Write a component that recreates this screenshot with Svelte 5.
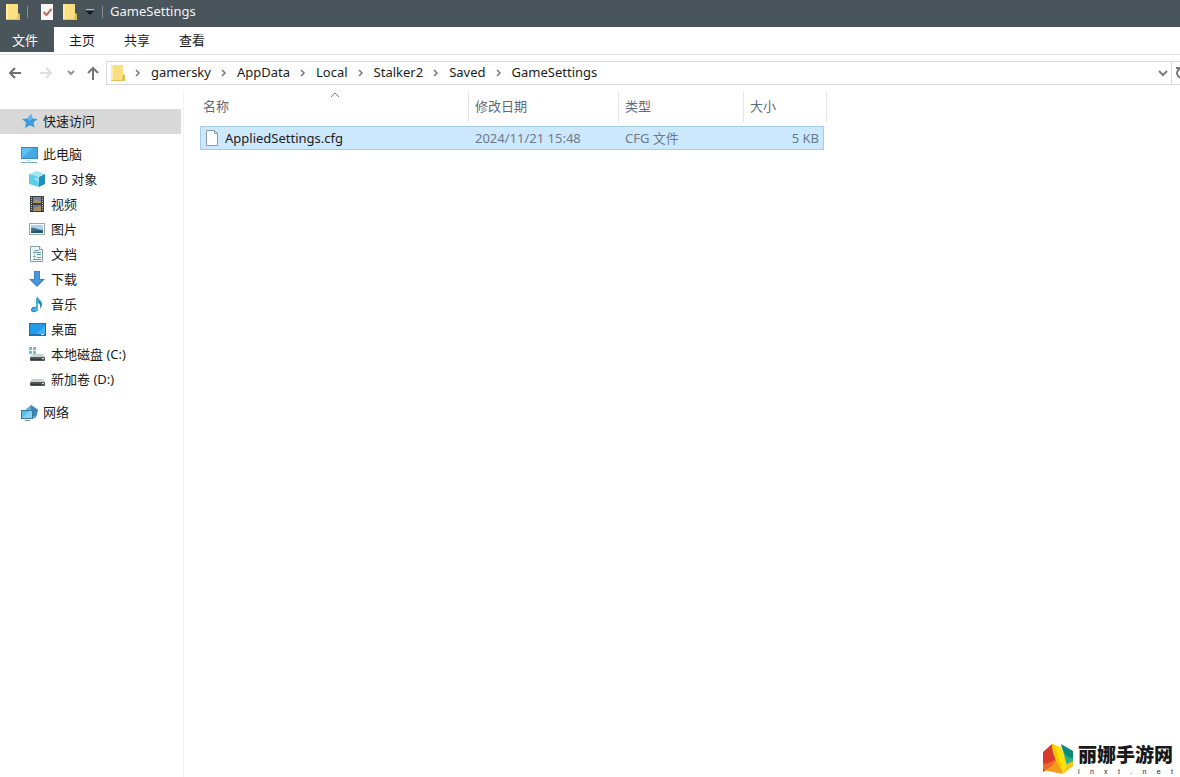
<script>
  const tabs = ['主页', '共享', '查看'];
  const crumbs = ['gamersky', 'AppData', 'Local', 'Stalker2', 'Saved', 'GameSettings'];

  const folders = [
    { icon: 'cube', label: '3D 对象' },
    { icon: 'video', label: '视频' },
    { icon: 'picture', label: '图片' },
    { icon: 'document', label: '文档' },
    { icon: 'download', label: '下载' },
    { icon: 'music', label: '音乐' },
    { icon: 'desktop', label: '桌面' },
    { icon: 'system', label: '本地磁盘 (C:)' },
    { icon: 'drive', label: '新加卷 (D:)' }
  ];

  const files = [
    { name: 'AppliedSettings.cfg', date: '2024/11/21 15:48', type: 'CFG 文件', size: '5 KB' }
  ];

  let selected = $state('AppliedSettings.cfg');
</script>

{#snippet folderIcon()}
  <svg width="14" height="18" viewBox="0 0 14 18" aria-hidden="true">
    <path d="M0 1h12v10l2 1v5H0z" fill="#fbe083" />
    <path d="M0 1h2v16H0z" fill="#fdeba6" />
    <path d="M12 10l2 1v6h-3z" fill="#e3bb55" />
    <path d="M0 16.500h14" stroke="#e6c35e" />
  </svg>
{/snippet}

{#snippet icon(kind)}
  <svg width="18" height="18" viewBox="0 0 18 18" aria-hidden="true">
    {#if kind === 'star'}
      <path d="M11 2l1.500 4.500 5 .5-4 3.500 1 5-4.500-2.300L5 16l1-5.500L2 7l5.500-.5z" fill="#3b9bdc" />
      <path d="M11 2l1.500 4.500-2.500 3-2.500-3z" fill="#62b8ec" />
    {:else if kind === 'pc'}
      <rect x="1" y="2" width="17" height="12" fill="#3a8cc0" />
      <rect x="2" y="3" width="15" height="10" fill="#5cc0f2" />
      <path d="M2 13L13 3h4v10z" fill="#43aae6" />
      <path d="M1 17.500h16" stroke="#77a9c6" />
      <path d="M7 15.500h4" stroke="#c3dce9" />
    {:else if kind === 'cube'}
      <path d="M1 4l8-3 8 3-7 3z" fill="#a5e5f3" />
      <path d="M1 4l10 3v10L1 14z" fill="#5bcde8" />
      <path d="M17 4l-6 3v10l6-3z" fill="#2390b8" />
      <path d="M5 8l6-1v6z" fill="#8ce0f2" />
    {:else if kind === 'video'}
      <rect x="2" y="1" width="14" height="16" fill="#3b4042" />
      <rect x="5" y="2" width="8" height="6" fill="#7188a3" />
      <path d="M5 8l3-4 5 3v1z" fill="#b39362" />
      <rect x="5" y="10" width="8" height="6" fill="#617c9c" />
      <path d="M5 15l3-3 5-1v5H5z" fill="#b18b5d" />
      <path d="M3.500 2v14M14.500 2v14" stroke="#c1c6c8" stroke-dasharray="1 1" />
    {:else if kind === 'picture'}
      <rect x="1.500" y="3.500" width="15" height="11" fill="#f6f9fa" stroke="#9ba8ad" />
      <rect x="3" y="5" width="12" height="8" fill="#a9d4ed" />
      <path d="M3 8c4-1 6 2 12 2v3H3z" fill="#46748b" />
      <path d="M3 12c4-2 8-2 12-1v2H3z" fill="#26566d" />
    {:else if kind === 'document'}
      <path d="M2.500 1.500h9l3 3v12h-12z" fill="#f1f8f7" stroke="#829c9f" />
      <path d="M11.500 1.500v3h3" fill="#fff" stroke="#829c9f" />
      <path d="M7 5.500h4M5 7.500h8M9 9.500h4M5 11.500h3M9 12.500h4M5 14.500h8" stroke="#659da5" />
      <path d="M6.500 5v9" stroke="#a0ced3" />
    {:else if kind === 'download'}
      <path d="M6 1h6v8h5l-8 8-8-8h5z" fill="#3986c8" />
      <path d="M7 2h4v8h3l-5 5-5-5h3z" fill="#4997d8" />
    {:else if kind === 'music'}
      <path d="M9 1c1 4 5 4 5 8 0 2-1 4-2 5 1-4-1-6-2-6v6c0 4-7 4-7 1 0-3 3-4 5-3z" fill="#2685b8" />
      <path d="M8 1c0 4 4 4 5 7-1-1-2-2-3-2v8c0 3-5 3-6 1 1-2 3-3 4-2z" fill="#43b2de" />
    {:else if kind === 'desktop'}
      <rect x="1" y="3" width="17" height="13" fill="#1673b8" />
      <rect x="2" y="4" width="15" height="10" fill="#229bed" />
      <path d="M8 14l9-8v8z" fill="#45b1f4" />
      <path d="M13 14.500h3" stroke="#bde6ff" />
    {:else if kind === 'network'}
      <path d="M6 6l5-4 7 5-2 8-6 1z" fill="#6aaed6" />
      <path d="M11 2v12l5-1 2-6z" fill="#3d83b5" />
      <rect x="1.500" y="7.500" width="11" height="8" fill="#5cbdec" stroke="#35799f" />
      <path d="M2 15L10 8h2v7z" fill="#84d1f2" />
      <path d="M5 17.500h5" stroke="#7398ad" />
    {:else}
      {#if kind === 'system'}
        <path d="M1 2h3v3H1zM5 2h3v3H5zM1 6h3v3H1zM5 6h3v3H5z" fill="#5fc3dc" />
      {/if}
      <path d="M4 9h11l2 3H2z" fill="#cfd2d3" />
      <rect x="2" y="12" width="15" height="4" rx="1" fill="#505657" />
      <path d="M3 14.500h10" stroke="#323839" />
      <path d="M14 13.500h2" stroke="#d9eee1" />
    {/if}
  </svg>
{/snippet}

<div class="explorer">
  <header class="titlebar">
    {@render folderIcon()}
    <span class="divider"></span>
    <button class="quick check" aria-label="属性">
      <svg width="14" height="16" viewBox="0 0 14 16">
        <path d="M0 0h12v16H0z" fill="#f7f5f5" />
        <path d="M2.500 8l3 3 5-6" stroke="#bd7356" stroke-width="2" />
      </svg>
    </button>
    <button class="quick" aria-label="新建文件夹">{@render folderIcon()}</button>
    <button class="quick more" aria-label="自定义快速访问工具栏">
      <svg width="10" height="8" viewBox="0 0 10 8">
        <path d="M1 1.500h8" stroke="#b4babd" />
        <path d="M1 3h8L5 7z" fill="#15191b" />
      </svg>
    </button>
    <span class="divider"></span>
    <h1>GameSettings</h1>
  </header>

  <nav class="ribbon">
    <button class="file">文件</button>
    {#each tabs as tab}
      <button>{tab}</button>
    {/each}
  </nav>

  <div class="address">
    <div class="history">
      <button aria-label="后退">
        <svg width="14" height="14" viewBox="0 0 14 14"><path d="M13 7H2M7 2L2 7l5 5" stroke="#707070" stroke-width="2" /></svg>
      </button>
      <button class="forward" aria-label="前进">
        <svg width="14" height="14" viewBox="0 0 14 14"><path d="M1 7h11M7 2l5 5-5 5" stroke="#dedede" stroke-width="2" /></svg>
      </button>
      <button class="recent" aria-label="最近浏览的位置">
        <svg width="8" height="14" viewBox="0 0 8 14"><path d="M1 5l3 3 3-3" stroke="#959595" stroke-width="2" /></svg>
      </button>
      <button aria-label="上移">
        <svg width="14" height="14" viewBox="0 0 14 14"><path d="M7 14V2M2 7l5-5 5 5" stroke="#757575" stroke-width="2" /></svg>
      </button>
    </div>
    <div class="path">
      {@render folderIcon()}
      {#each crumbs as crumb}
        <svg class="chevron" width="6" height="10" viewBox="0 0 6 10" aria-hidden="true"><path d="M1 2l3 3-3 3" stroke="#777" stroke-width="1.500" /></svg>
        <button class="crumb">{crumb}</button>
      {/each}
      <button class="drop" aria-label="以前的位置">
        <svg width="12" height="10" viewBox="0 0 12 10"><path d="M2 3l4 4 4-4" stroke="#7b7b7b" stroke-width="2" /></svg>
      </button>
    </div>
    <button class="refresh" aria-label="刷新">
      <svg width="14" height="14" viewBox="0 0 14 14"><path d="M11 4a5 5 0 1 0 1 4M1 2h5" stroke="#777" stroke-width="2" /></svg>
    </button>
  </div>

  <div class="body">
    <aside>
      <ul>
        <li><button class="root current">{@render icon('star')}快速访问</button></li>
        <li class="group">
          <button class="root">{@render icon('pc')}此电脑</button>
          <ul>
            {#each folders as folder}
              <li><button>{@render icon(folder.icon)}{folder.label}</button></li>
            {/each}
          </ul>
        </li>
        <li class="group"><button class="root">{@render icon('network')}网络</button></li>
      </ul>
    </aside>

    <main>
      <table>
        <thead>
          <tr>
            <th class="name">
              名称
              <svg class="sort" width="10" height="6" viewBox="0 0 10 6" aria-hidden="true"><path d="M1 5l4-4 4 4" stroke="#777" /></svg>
            </th>
            <th class="date">修改日期</th>
            <th class="type">类型</th>
            <th class="size">大小</th>
          </tr>
        </thead>
        <tbody>
          {#each files as file}
            <tr class:selected={selected === file.name} onclick={() => (selected = file.name)}>
              <td>
                <span class="filename">
                  <svg width="14" height="18" viewBox="0 0 14 18" aria-hidden="true">
                    <path d="M1.500 1.500h8l3 3v12h-11z" fill="#fdfdfd" stroke="#8f9ba3" />
                    <path d="M9.500 1.500v3h3" stroke="#8f9ba3" />
                  </svg>
                  {file.name}
                </span>
              </td>
              <td>{file.date}</td>
              <td>{file.type}</td>
              <td>{file.size}</td>
            </tr>
          {/each}
        </tbody>
      </table>
    </main>
  </div>

  <div class="brand">
    <svg width="30" height="31" viewBox="0 0 30 31" aria-hidden="true">
      <path d="M0 9L9 1l6 15C12 19 8 25 0 29z" fill="#d83a2e" />
      <path d="M0 21c5 0 9-2 13-6l4 13L0 26z" fill="#ee6a2a" />
      <path d="M0 27c7-1 11-5 14-12l6 16z" fill="#f39b1d" />
      <path d="M9 1l9 3 6 17-4 10c-3-12-9-16-11-30z" fill="#ffe10a" />
      <path d="M9 1l3 1 8 27v2C16 20 9 15 9 1z" fill="#fbc608" />
      <path d="M18 1l12 7v8c-6 0-10-5-12-15z" fill="#0a8a76" />
      <path d="M18 1c2 9 6 14 12 14v5l-6 3z" fill="#2eae83" />
      <path d="M24 21l6-3v5l-10 8z" fill="#f4c514" />
    </svg>
    <div>
      <strong>丽娜手游网</strong>
      <span class="domain">
        {#each 'lnxt.net' as letter}<i>{letter}</i>{/each}
      </span>
    </div>
  </div>
</div>

<style>
  :global(body) {
    background: #fff;
  }

  .explorer {
    position: relative;
    display: flex;
    flex-direction: column;
    min-height: 100vh;
    overflow: hidden;
    font-family: "Noto Sans", "Noto Sans CJK SC", sans-serif;
    font-size: 13px;
    line-height: 18px;
    color: #1c1c1c;
  }

  button {
    display: flex;
    align-items: center;
    padding: 0;
    border: 0;
    background: none;
    font: inherit;
    color: inherit;
    white-space: nowrap;
    cursor: pointer;
  }

  svg {
    flex: none;
    fill: none;
  }

  ul {
    margin: 0;
    padding: 0;
    list-style: none;
  }

  .titlebar {
    display: flex;
    align-items: center;
    height: 24px;
    padding: 0 6px 3px;
    background: #4a555b;
    color: #f0f2f3;
  }

  .divider {
    width: 1px;
    height: 12px;
    margin: 0 7px;
    background: #879095;
  }

  .quick {
    margin-right: 8px;
  }

  .quick.check {
    margin-left: 6px;
  }

  .quick.more {
    margin: 0;
  }

  h1 {
    margin: 0;
    padding-bottom: 2px;
    font-size: 13px;
    font-weight: 400;
  }

  .ribbon {
    display: flex;
    height: 27px;
    border-bottom: 1px solid #e4e4e4;
  }

  .ribbon button {
    height: 25px;
    padding: 0 15px 0 14px;
  }

  .ribbon .file {
    margin-right: 1px;
    padding: 0 16px 0 12px;
    background: #4a555b;
    color: #fff;
  }

  .address {
    display: flex;
    align-items: center;
    padding-top: 6px;
  }

  .history {
    display: flex;
    flex: none;
    width: 92px;
    padding: 0 6px 0 8px;
  }

  .forward {
    margin: 0 14px 0 17px;
  }

  .recent {
    margin-right: 11px;
  }

  .path {
    display: flex;
    flex: 1;
    align-items: center;
    height: 22px;
    padding-left: 4px;
    border: 1px solid #dadada;
  }

  .crumb {
    padding-bottom: 2px;
  }

  .chevron {
    margin: 0 10px;
  }

  .drop {
    margin-left: auto;
    padding: 0 2px;
  }

  .refresh {
    width: 8px;
    height: 24px;
    padding-left: 3px;
    border: 1px solid #dadada;
    border-width: 1px 0;
    overflow: hidden;
  }

  .body {
    display: flex;
    flex: 1;
    margin-top: 6px;
  }

  aside {
    flex: none;
    width: 184px;
    padding-top: 18px;
    border-right: 1px solid #f3f3f3;
    box-sizing: border-box;
  }

  aside button {
    gap: 5px;
    width: 181px;
    height: 25px;
    padding: 0 0 1px 28px;
  }

  aside .root {
    padding-left: 20px;
  }

  aside .current {
    background: #d9d9d9;
  }

  .group {
    margin-top: 8px;
  }

  main {
    flex: 1;
    padding-left: 16px;
  }

  table {
    width: 624px;
    table-layout: fixed;
    border-spacing: 0;
    color: #5d6b78;
  }

  th {
    position: relative;
    height: 30px;
    padding: 0 6px 5px;
    font-weight: 400;
    text-align: left;
  }

  th::after {
    content: '';
    position: absolute;
    top: 0;
    right: 0;
    width: 1px;
    height: 31px;
    background: #e6e6e6;
  }

  .name {
    width: 257px;
    padding-left: 3px;
    padding-right: 9px;
  }

  .date {
    width: 138px;
  }

  .type {
    width: 113px;
  }

  .size::after {
    right: -3px;
  }

  .sort {
    position: absolute;
    top: 1px;
    left: 50%;
    transform: translateX(-50%);
  }

  td {
    height: 21px;
    padding: 0 6px 1px;
    border: 1px solid transparent;
    border-width: 1px 0;
    color: #6c7b88;
  }

  td:first-child {
    padding-left: 4px;
    border-left-width: 1px;
    color: #1c1c1c;
  }

  td:last-child {
    padding-right: 4px;
    border-right-width: 1px;
    text-align: right;
  }

  .selected td {
    background: #cce8ff;
    border-color: #a5cde5;
  }

  .filename {
    display: flex;
    align-items: center;
    gap: 6px;
  }

  .brand {
    position: absolute;
    right: 7px;
    bottom: 1px;
    display: flex;
    align-items: center;
    gap: 5px;
    color: #191919;
  }

  .brand strong {
    display: block;
    font-family: "Noto Sans CJK SC", sans-serif;
    font-size: 19px;
    font-weight: 900;
    line-height: 28px;
  }

  .domain {
    display: flex;
    justify-content: space-between;
    font-family: "Liberation Sans", sans-serif;
    font-size: 7px;
    line-height: 8px;
  }

  .domain i {
    font-style: normal;
  }
</style>
